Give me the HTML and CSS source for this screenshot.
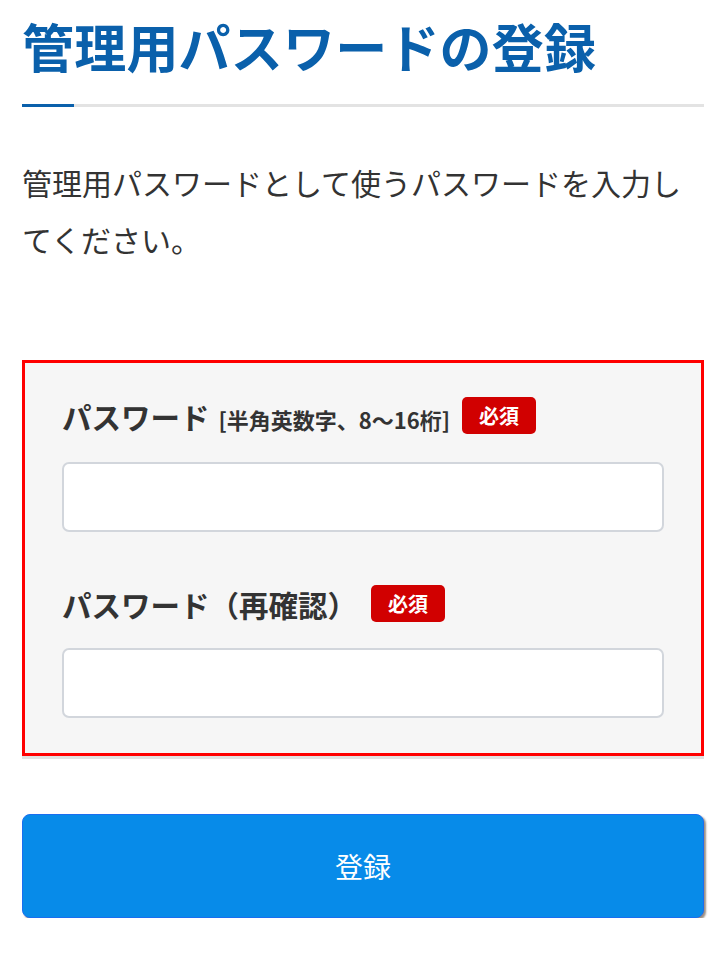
FILE: index.html
```html
<!DOCTYPE html>
<html lang="ja">
<head>
<meta charset="utf-8">
<title>管理用パスワードの登録</title>
<link rel="stylesheet" href="styles.css">
</head>
<body>
<main class="page">
  <h1 class="title">管理用パスワードの登録</h1>
  <div class="divider"><span class="divider-accent"></span></div>
  <p class="lead">管理用パスワードとして使うパスワードを入力してください。</p>

  <form class="form-box">
    <div class="field">
      <div class="label-row">
        <span class="label">パスワード</span>
        <span class="note">[半角英数字、8〜16桁]</span>
        <span class="badge">必須</span>
      </div>
      <input class="input" type="password">
    </div>
    <div class="field field-second">
      <div class="label-row">
        <span class="label">パスワード（再確認）</span>
        <span class="badge badge-wide">必須</span>
      </div>
      <input class="input" type="password">
    </div>
  </form>

  <button class="submit" type="button">登録</button>
</main>
</body>
</html>
```

FILE: styles.css
```css
* { box-sizing: border-box; }

html, body {
  margin: 0;
  padding: 0;
  background: #ffffff;
}

body {
  font-family: "Noto Sans CJK JP", "Noto Sans", sans-serif;
  color: #333333;
}

.page {
  padding: 0 22px;
  display: flex;
  flex-direction: column;
}

.title {
  margin: 18px 0 0;
  font-size: 52px;
  line-height: 56px;
  font-weight: 700;
  color: #0a60ab;
  letter-spacing: 0.2px;
}

.divider {
  margin-top: 30px;
  height: 3px;
  background: #e3e3e3;
  display: flex;
}

.divider-accent {
  width: 52px;
  height: 3px;
  background: #0a60ab;
}

.lead {
  margin: 47px 0 0;
  font-size: 30px;
  line-height: 57px;
  color: #333333;
}

.form-box {
  margin-top: 92px;
  background: #f6f6f6;
  border: 3px solid #ff0000;
  padding: 34px 37px 35px 37px;
  box-shadow: 0 3px 0 #e2e2e2;
  display: flex;
  flex-direction: column;
}

.field {
  display: flex;
  flex-direction: column;
}

.field-second {
  margin-top: 53px;
}

.label-row {
  display: flex;
  align-items: center;
  height: 37px;
}

.label {
  font-size: 29.5px;
  font-weight: 700;
  color: #333333;
}

.note {
  margin-left: 9px;
  font-size: 22px;
  font-weight: 700;
  color: #333333;
  padding-top: 6px;
  letter-spacing: 0;
}

.badge {
  margin-left: 12px;
  width: 74px;
  height: 37px;
  border-radius: 5px;
  background: #d10000;
  color: #ffffff;
  font-size: 20px;
  font-weight: 700;
  display: flex;
  align-items: center;
  justify-content: center;
}

.badge-wide {
  margin-left: 14px;
}

.input {
  margin-top: 28px;
  width: 100%;
  height: 70px;
  background: #ffffff;
  border: 2px solid #d2d6dc;
  border-radius: 7px;
  outline: none;
}

.field-second .input {
  margin-top: 26px;
}

.submit {
  margin-top: 58px;
  width: 100%;
  height: 104px;
  background: #078be9;
  border: 1px solid #1a6ef0;
  border-radius: 8px;
  box-shadow: 2px 2px 2px #9b8f84;
  color: #ffffff;
  font-family: "Noto Sans CJK JP", "Noto Sans", sans-serif;
  font-size: 28px;
  font-weight: 400;
  cursor: pointer;
}
```
